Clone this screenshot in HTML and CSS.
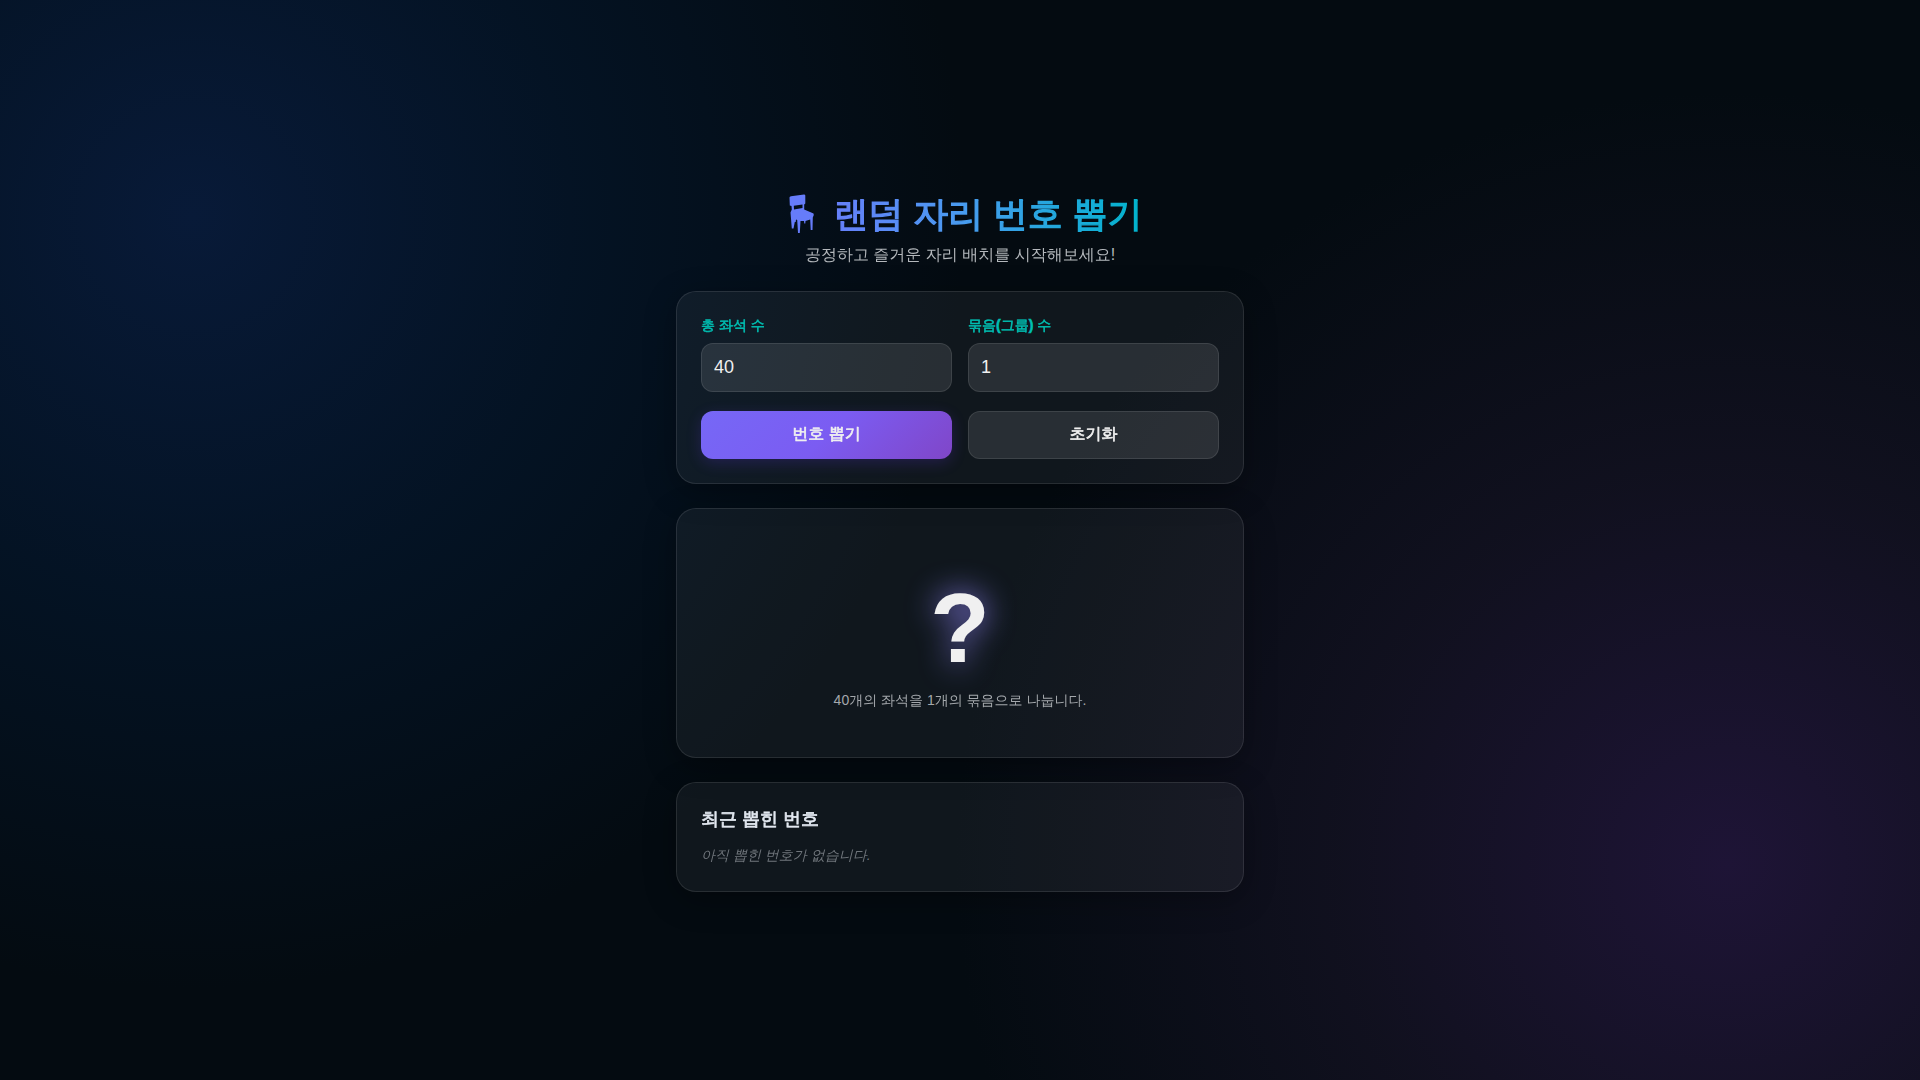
FILE: index.html
```html
<!DOCTYPE html>
<html lang="ko">
<head>
  <meta charset="UTF-8">
  <title>랜덤 자리 번호 뽑기</title>
  <meta name="viewport" content="width=device-width, initial-scale=1.0">
  <link rel="stylesheet" href="styles.css">
</head>
<body>

  <main class="container">
    <header class="header">
      <h1 class="title">
        <svg class="chair" viewBox="0 0 48 48" aria-hidden="true">
          <path d="M12.500 7.500 Q12.500 6.500 14 6.200 L27 4.500 Q28.300 4.500 28.300 5.500 L28.300 13.500 L27.200 14.500 L27.200 19.500 L36.500 23.500 L36.800 25 L35.800 27.500 L35.500 40 L33.700 40 L33.200 29.500 L30 30.500 L28.500 31 L28.300 33.500 L27.300 33.500 L27 31 L23.500 31 L22.800 43 L21 43 L20.200 30 L19 29.500 L18.700 32 L17.800 32 L16.500 38.500 L14.800 38.500 L13.500 22.500 L14.800 19.500 L14.500 16 L12.800 15.500 Z M16.800 15.800 L17 19.500 L25.500 18 L25.500 14.500 Z" fill-rule="evenodd"/>
        </svg>
        <span>랜덤 자리 번호 뽑기</span>
      </h1>
      <p class="subtitle">공정하고 즐거운 자리 배치를 시작해보세요!</p>
    </header>

    <section class="card settings">
      <div class="field">
        <label for="totalSeats">총 좌석 수</label>
        <input type="number" id="totalSeats" value="40" min="1">
      </div>
      <div class="field">
        <label for="groupCount">묶음(그룹) 수</label>
        <input type="number" id="groupCount" value="1" min="1">
      </div>
      <button type="button" class="btn btn-primary">번호 뽑기</button>
      <button type="button" class="btn btn-secondary">초기화</button>
    </section>

    <section class="card display">
      <div class="number">?</div>
      <p class="status">40개의 좌석을 1개의 묶음으로 나눕니다.</p>
    </section>

    <section class="card history">
      <h2>최근 뽑힌 번호</h2>
      <p class="empty">아직 뽑힌 번호가 없습니다.</p>
    </section>
  </main>

</body>
</html>
```
FILE: styles.css
```css
:root {
  --bg-color: #040b11;
  --text-color: #f0f0f0;
  --accent: #00bfb2;
  --card-bg: rgba(255, 255, 255, 0.05);
  --card-border: rgba(255, 255, 255, 0.1);
}

* {
  box-sizing: border-box;
  margin: 0;
  padding: 0;
}

body {
  min-height: 100vh;
  display: flex;
  justify-content: center;
  align-items: center;
  font-family: "Liberation Sans", "WenQuanYi Zen Hei", "Noto Sans CJK KR", sans-serif;
  color: var(--text-color);
  background-color: var(--bg-color);
  background-image:
    radial-gradient(circle at 10% 20%, #081a38 0%, rgba(4, 24, 48, 0.6) 20%, transparent 40%),
    radial-gradient(circle at 90% 80%, #1e1436 0%, rgba(25, 20, 40, 0.6) 20%, transparent 40%);
}

.container {
  width: 100%;
  max-width: 600px;
  padding: 16px 16px 20px;
  display: flex;
  flex-direction: column;
  gap: 24px;
}

.header {
  text-align: center;
}

/* the Korean face has no bold cut, thicken it */
.title,
.history h2,
label,
.btn {
  font-weight: bold;
  -webkit-text-stroke: 0.04em currentColor;
}

.title {
  display: flex;
  justify-content: center;
  align-items: center;
  gap: 8px;
  font-size: 35px;
  line-height: 58px;
}

.title span {
  background: linear-gradient(90deg, #667ffa, #4a9af0 40%, #00b4cc);
  -webkit-background-clip: text;
  background-clip: text;
  color: transparent;
}

.chair {
  width: 48px;
  height: 48px;
  fill: #667cfa;
}

.subtitle {
  font-size: 16px;
  line-height: 24px;
  color: #b4b8bc;
}

.card {
  padding: 24px;
  background: var(--card-bg);
  border: 1px solid var(--card-border);
  border-radius: 20px;
  box-shadow: 0 8px 32px rgba(0, 0, 0, 0.3);
}

.settings {
  display: grid;
  grid-template-columns: 1fr 1fr;
  gap: 19px 16px;
}

.field {
  display: flex;
  flex-direction: column;
  gap: 8px;
}

label {
  font-size: 14px;
  line-height: 19px;
  color: var(--accent);
}

input,
.btn {
  width: 100%;
  height: 48px;
  border: 1px solid rgba(255, 255, 255, 0.1);
  border-radius: 12px;
  background: rgba(255, 255, 255, 0.1);
  color: var(--text-color);
  font-family: inherit;
}

input {
  height: 49px;
  padding: 12px;
  font-size: 18px;
}

.btn {
  font-size: 16px;
  cursor: pointer;
}

.btn-primary {
  border: none;
  background: linear-gradient(135deg, #7668f6, #7b5cf2 50%, #8046c8);
  box-shadow: 0 4px 15px rgba(108, 60, 255, 0.2);
}

.display {
  min-height: 250px;
  padding-top: 50px;
  display: flex;
  flex-direction: column;
  justify-content: center;
  align-items: center;
  gap: 12px;
}

.number {
  font-size: 98px;
  font-weight: bold;
  line-height: 96px;
  text-shadow: 0 0 30px rgba(150, 138, 255, 0.9);
}

.status {
  font-size: 14px;
  line-height: 24px;
  color: #a4a8ac;
}

.history {
  display: flex;
  flex-direction: column;
  gap: 12px;
}

.history h2 {
  font-size: 18px;
  line-height: 24px;
  color: #e2e8f0;
}

.empty {
  font-size: 14px;
  line-height: 24px;
  font-style: italic;
  color: #70767c;
}
```
